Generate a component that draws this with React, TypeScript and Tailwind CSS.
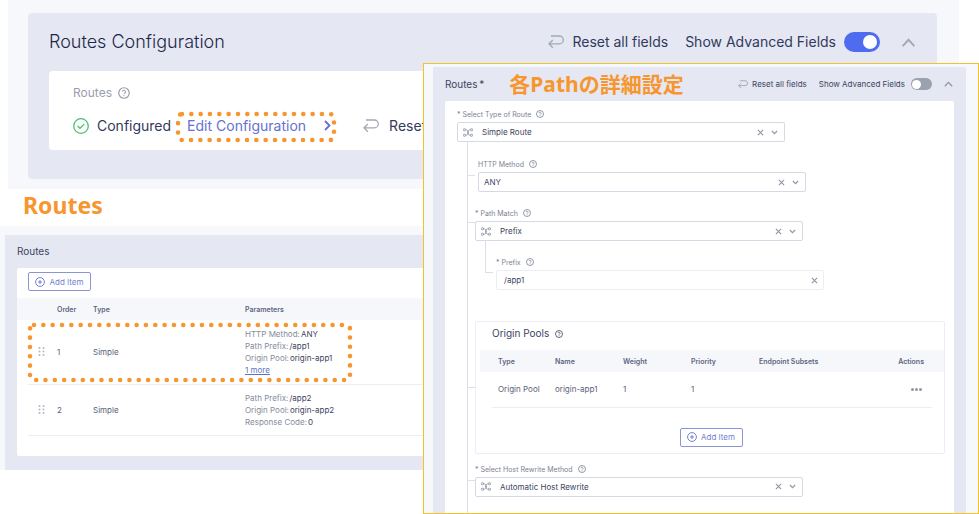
import { useState, type ReactNode } from "react";

const tableHead = "pt-[2px] text-[7px] font-semibold text-[#5d6580]";

function HelpIcon({ className }: { className: string }) {
  return (
    <svg className={className} viewBox="0 0 16 16" fill="none" stroke="currentColor" aria-hidden="true">
      <circle cx="8" cy="8" r="7" strokeWidth="1.6" />
      <path d="M6 6.3a2 2 0 1 1 3 1.9c-.7.4-1 .7-1 1.4" strokeWidth="1.4" />
      <circle cx="8" cy="11.7" r=".5" strokeWidth=".6" fill="currentColor" />
    </svg>
  );
}

function ResetIcon({ className }: { className: string }) {
  return (
    <svg className={className} viewBox="0 0 16 14" fill="none" stroke="currentColor" aria-hidden="true">
      <path d="M3 1H11.4a3.9 3.9 0 0 1 0 7.8H1.2M4.8 5 1 8.8l3.8 4" strokeWidth="1.3" />
    </svg>
  );
}

function NodesIcon() {
  return (
    <svg className="h-[9px] w-[10px] shrink-0 text-[#9196a8]" viewBox="0 0 20 18" fill="none" stroke="currentColor" strokeWidth="1.7" aria-hidden="true">
      <rect x="1" y="1.5" width="4" height="4" rx="1" />
      <rect x="1" y="12.5" width="4" height="4" rx="1" />
      <rect x="15" y="1.5" width="4" height="4" rx="1" />
      <rect x="15" y="12.5" width="4" height="4" rx="1" />
      <path d="M5 3.5h2q2 0 2 3v5q0 3-2 3H5M15 3.5h-2q-2 0-2 3v5q0 3 2 3h2" />
    </svg>
  );
}

function CrossIcon() {
  return (
    <svg className="size-[7px]" viewBox="0 0 8 8" fill="none" stroke="currentColor" strokeWidth="1.3" aria-hidden="true">
      <path d="m1 1 6 6M7 1 1 7" />
    </svg>
  );
}

function ChevronUp({ className }: { className: string }) {
  return (
    <svg className={className} viewBox="0 0 16 10" fill="none" stroke="currentColor" strokeWidth="2.2" aria-hidden="true">
      <path d="m1.5 9 6.5-7 6.5 7" />
    </svg>
  );
}

function PlusCircle() {
  return (
    <svg className="size-[10px]" viewBox="0 0 20 20" fill="none" stroke="currentColor" strokeWidth="2" aria-hidden="true">
      <circle cx="10" cy="10" r="8.8" />
      <path d="M10 6v8M6 10h8" />
    </svg>
  );
}

function DragHandle() {
  return (
    <svg className="block h-[9px] w-[7px] text-[#b4b8c4]" viewBox="0 0 7 9" fill="currentColor" aria-hidden="true">
      <circle cx="1.5" cy="1" r="1" />
      <circle cx="5.5" cy="1" r="1" />
      <circle cx="1.5" cy="4.5" r="1" />
      <circle cx="5.5" cy="4.5" r="1" />
      <circle cx="1.5" cy="8" r="1" />
      <circle cx="5.5" cy="8" r="1" />
    </svg>
  );
}

function AddItemButton() {
  return (
    <button type="button" className="flex h-[19px] w-[63px] items-center justify-center gap-1 rounded-xs border border-[#8a95d8] bg-white text-[8px] text-[#7480cf]">
      <PlusCircle />
      Add Item
    </button>
  );
}

function Switch({ label, large }: { label: string; large?: boolean }) {
  const [on, setOn] = useState(Boolean(large));
  return (
    <label className={large ? "flex items-center gap-2 text-sm" : "flex items-center gap-[6px] text-[8px]"}>
      {label}
      <input type="checkbox" role="switch" className="peer sr-only" checked={on} onChange={(e) => setOn(e.target.checked)} />
      <span
        className={
          large
            ? "flex h-5 w-9 items-center justify-start rounded-full bg-[#9aa1b0] px-[3px] peer-checked:justify-end peer-checked:bg-[#4f6bf0]"
            : "flex h-3 w-[21px] items-center justify-start rounded-full bg-[#9aa1b0] px-px peer-checked:justify-end peer-checked:bg-[#4f6bf0]"
        }
      >
        <span className={large ? "size-[14px] rounded-full bg-white" : "size-[9px] rounded-full bg-white"} />
      </span>
    </label>
  );
}

function FieldLabel({ id, required, children }: { id: string; required?: boolean; children: ReactNode }) {
  return (
    <label htmlFor={id} className="flex h-[15px] items-center gap-[5px] text-[7px] text-[#7c8296]">
      <span className="pt-[2px]">
        {required && "* "}
        {children}
      </span>
      <HelpIcon className="mb-px size-2" />
    </label>
  );
}

function SelectField({ id, label, value, required, nodes }: { id: string; label: string; value: string; required?: boolean; nodes?: boolean }) {
  return (
    <div className="w-[328px] max-w-full">
      <FieldLabel id={id} required={required}>{label}</FieldLabel>
      <div className="flex h-5 items-center rounded-xs border border-[#d6d9e3] bg-white px-[5px]">
        {nodes && <NodesIcon />}
        <select id={id} className={`min-w-0 flex-1 appearance-none bg-transparent text-[8px] text-[#3c4560] outline-none ${nodes ? "pl-[9px]" : ""}`}>
          <option>{value}</option>
        </select>
        <button type="button" aria-label={`Clear ${label}`} className="text-[#9096a6]">
          <CrossIcon />
        </button>
        <svg className="mr-[1px] ml-[7px] h-[5px] w-[7px] text-[#9096a6]" viewBox="0 0 8 5" fill="none" stroke="currentColor" strokeWidth="1.3" aria-hidden="true">
          <path d="m1 .8 3 3 3-3" />
        </svg>
      </div>
    </div>
  );
}

function Branch({ children, tick, gap }: { children: ReactNode; tick: string; gap?: boolean }) {
  return (
    <div className={gap ? "flex gap-[3px]" : "flex"}>
      <span className={`h-px w-[7px] shrink-0 bg-[#dcdee8] ${tick}`} />
      <div className="min-w-0 flex-1">{children}</div>
    </div>
  );
}

function DottedOutline({ className, width, height }: { className: string; width: number; height: number }) {
  return (
    <svg className={`pointer-events-none absolute ${className}`} width={width} height={height} aria-hidden="true">
      <rect x="3" y="3" width={width - 6} height={height - 6} rx="4" fill="none" stroke="#f7962e" strokeWidth="4.6" strokeLinecap="round" strokeDasharray="0 9.33" />
    </svg>
  );
}

function RoutesConfiguration() {
  return (
    <section className="mr-5 ml-2 bg-[#f7f8fb] pt-[13px] pr-[22px] pb-[10px] pl-5 text-[#323a5c]">
      <div className="rounded bg-[#e5e7f3] pr-[21px] pb-[29px] pl-[21px]">
        <header className="flex h-[58px] items-center">
          <h2 className="flex-1 text-lg font-light text-[#1e2749]">Routes Configuration</h2>
          <button type="button" className="mr-[17px] flex items-center gap-2 text-sm">
            <ResetIcon className="h-[14px] w-4 text-[#a4a8b6]" />
            Reset all fields
          </button>
          <Switch label="Show Advanced Fields" large />
          <button type="button" aria-label="Collapse" className="ml-[21px] text-[#a4a8b6]">
            <ChevronUp className="h-[9px] w-[15px]" />
          </button>
        </header>
        <div className="rounded-sm bg-white px-6 pt-[13px] pb-[14px]">
          <h3 className="flex h-[18px] items-center gap-[6px] text-xs text-[#9a9eac]">
            Routes
            <HelpIcon className="size-3" />
          </h3>
          <div className="mt-[13px] flex h-[21px] items-center text-sm">
            <svg className="mr-2 size-4 text-[#4cc070]" viewBox="0 0 16 16" fill="none" stroke="currentColor" strokeWidth="1.3" aria-hidden="true">
              <circle cx="8" cy="8" r="7.3" />
              <path d="m4.6 8 2.4 2.3 4.3-4.2" />
            </svg>
            Configured
            <span className="relative ml-4 flex">
              <button type="button" className="flex items-center gap-[18px] text-[#6571cf]">
                Edit Configuration
                <svg className="h-[11px] w-[7px]" viewBox="0 0 7 11" fill="none" stroke="currentColor" strokeWidth="1.8" aria-hidden="true">
                  <path d="m1 1 4.5 4.5L1 10" />
                </svg>
              </button>
              <DottedOutline className="-top-[5px] -left-[12px]" width={162} height={32} />
            </span>
            <button type="button" className="ml-8 flex items-center gap-[10px]">
              <ResetIcon className="h-[14px] w-4 text-[#a4a8b6]" />
              Reset
            </button>
          </div>
        </div>
      </div>
    </section>
  );
}

const routes = [
  {
    order: 1,
    height: "h-16",
    params: [
      ["HTTP Method:", "ANY"],
      ["Path Prefix:", "/app1"],
      ["Origin Pool:", "origin-app1"],
    ],
    more: "1 more",
  },
  {
    order: 2,
    height: "h-[51px]",
    params: [
      ["Path Prefix:", "/app2"],
      ["Origin Pool:", "origin-app2"],
      ["Response Code:", "0"],
    ],
  },
];

function RoutesList() {
  return (
    <section className="mr-5 bg-[#f7f8fb] pt-[9px] pl-[5px]">
      <div className="bg-[#e5e7f3] px-3 pb-[14px]">
        <h2 className="flex h-[33px] items-center text-[10px] text-[#3c4560]">Routes</h2>
        <div className="rounded-xs bg-white pt-1 pb-5">
          <div className="ml-[11px]">
            <AddItemButton />
          </div>
          <div className="relative mt-[7px]">
            <table className="w-full table-fixed border-collapse text-left text-[8px] text-[#5a627b]">
              <thead>
                <tr className="h-[22px] bg-[#f6f7fa]">
                  <th className="w-[11px]" />
                  <th className="w-[29px]" />
                  <th className={`w-9 ${tableHead}`}>Order</th>
                  <th className={`w-[152px] ${tableHead}`}>Type</th>
                  <th className={tableHead}>Parameters</th>
                </tr>
              </thead>
              <tbody>
                {routes.map((route) => (
                  <tr key={route.order} className={route.height}>
                    <td />
                    <td className="border-b border-[#eceef3] pl-[10px]">
                      <DragHandle />
                    </td>
                    <td className="border-b border-[#eceef3]">{route.order}</td>
                    <td className="border-b border-[#eceef3]">Simple</td>
                    <td className="border-b border-[#eceef3] leading-3">
                      {route.params.map(([name, value]) => (
                        <div key={name} className="text-[#858b9d]">
                          {name}
                          <span className="ml-px text-[#3c4560]">{value}</span>
                        </div>
                      ))}
                      {route.more && <a href="#more" className="block text-[#5c72c8] underline">{route.more}</a>}
                    </td>
                  </tr>
                ))}
              </tbody>
            </table>
            <DottedOutline className="top-[24px] left-[10px]" width={326} height={61} />
          </div>
        </div>
      </div>
    </section>
  );
}

function OriginPools() {
  return (
    <section className="mr-[9px] rounded-xs border border-[#eceef3] pb-[6px] pl-1">
      <h3 className="flex h-7 items-center gap-[6px] pb-[5px] pl-3 text-[10px] text-[#3c4560]">
        Origin Pools
        <HelpIcon className="size-2" />
      </h3>
      <table className="w-full table-fixed border-collapse text-left text-[8px] text-[#5a627b]">
        <thead>
          <tr className="h-[22px] bg-[#f6f7fa]">
            <th className="w-3" />
            <th className={`w-[63px] pl-[6px] ${tableHead}`}>Type</th>
            <th className={`w-[68px] ${tableHead}`}>Name</th>
            <th className={`w-[68px] ${tableHead}`}>Weight</th>
            <th className={`w-[68px] ${tableHead}`}>Priority</th>
            <th className={tableHead}>Endpoint Subsets</th>
            <th className={`w-10 pr-2 text-right ${tableHead}`}>Actions</th>
            <th className="w-3" />
          </tr>
        </thead>
        <tbody>
          <tr className="h-[35px]">
            <td />
            <td className="border-b border-[#eceef3] pl-[6px] whitespace-nowrap">Origin Pool</td>
            <td className="border-b border-[#eceef3]">origin-app1</td>
            <td className="border-b border-[#eceef3]">1</td>
            <td className="border-b border-[#eceef3]">1</td>
            <td className="border-b border-[#eceef3]" />
            <td className="border-b border-[#eceef3] pr-[10px]">
              <button type="button" aria-label="Row actions" className="ml-auto flex gap-px">
                <span className="size-[3px] rounded-full bg-[#9096a6]" />
                <span className="size-[3px] rounded-full bg-[#9096a6]" />
                <span className="size-[3px] rounded-full bg-[#9096a6]" />
              </button>
            </td>
            <td />
          </tr>
        </tbody>
      </table>
      <div className="mt-5 mr-[2px] flex justify-center">
        <AddItemButton />
      </div>
    </section>
  );
}

function RouteDetail() {
  return (
    <section className="absolute top-[63px] right-0 left-[423px] border border-[#f2c22a] bg-[#f7f8fb] pt-[3px] pr-3 pl-[9px] text-[#3c4560]">
      <div className="rounded-t-xs bg-[#e5e7f3] px-3">
        <header className="flex h-[34px] items-center">
          <h2 className="text-[10px]">Routes&thinsp;*</h2>
          <p className="ml-[25px] flex-1 text-[21px] leading-none font-bold whitespace-nowrap text-[#f7962e] font-['Noto_Sans','Noto_Sans_CJK_JP',sans-serif]">各Pathの詳細設定</p>
          <button type="button" className="mr-3 flex items-center gap-1 text-[8px]">
            <ResetIcon className="h-[9px] w-[10px] text-[#9a9fb0]" />
            Reset all fields
          </button>
          <Switch label="Show Advanced Fields" />
          <button type="button" aria-label="Collapse" className="mr-px ml-3 text-[#9096a6]">
            <ChevronUp className="h-[6px] w-[9px]" />
          </button>
        </header>
        <div className="rounded-t-xs bg-white pt-[6px] pl-3">
          <SelectField id="route-type" label="Select Type of Route" value="Simple Route" required nodes />
          <div className="ml-[10px] border-l border-[#dcdee8] pt-[15px] pb-4">
            <Branch tick="mt-[18px]" gap>
              <SelectField id="http-method" label="HTTP Method" value="ANY" />
            </Branch>
            <div className="mt-[14px]">
              <Branch tick="mt-4">
                <SelectField id="path-match" label="Path Match" value="Prefix" required nodes />
                <div className="ml-[10px] flex">
                  <span className="h-8 w-2 shrink-0 border-b border-l border-[#dcdee8]" />
                  <div className="w-[331px] pt-[14px] pl-[3px]">
                    <FieldLabel id="prefix" required>Prefix</FieldLabel>
                    <div className="flex h-5 items-center rounded-xs border border-[#eceef3] pr-[5px] pl-[7px]">
                      <input id="prefix" type="text" defaultValue="/app1" className="min-w-0 flex-1 bg-transparent text-[8px] outline-none" />
                      <button type="button" aria-label="Clear Prefix" className="text-[#9096a6]">
                        <CrossIcon />
                      </button>
                    </div>
                  </div>
                </div>
              </Branch>
            </div>
            <div className="mt-[31px]">
              <Branch tick="mt-[66px]">
                <OriginPools />
              </Branch>
            </div>
            <div className="mt-2">
              <Branch tick="mt-[18px]">
                <SelectField id="host-rewrite" label="Select Host Rewrite Method" value="Automatic Host Rewrite" required nodes />
              </Branch>
            </div>
          </div>
        </div>
      </div>
    </section>
  );
}

export default function App() {
  return (
    <main className="relative min-h-screen bg-white font-['Inter','Noto_Sans_CJK_JP',sans-serif]">
      <RoutesConfiguration />
      <h1 className="flex h-[37px] items-center pb-1 pl-[23px] text-[23px] leading-none font-bold text-[#f7962e] font-['Noto_Sans',sans-serif]">Routes</h1>
      <RoutesList />
      <RouteDetail />
    </main>
  );
}
